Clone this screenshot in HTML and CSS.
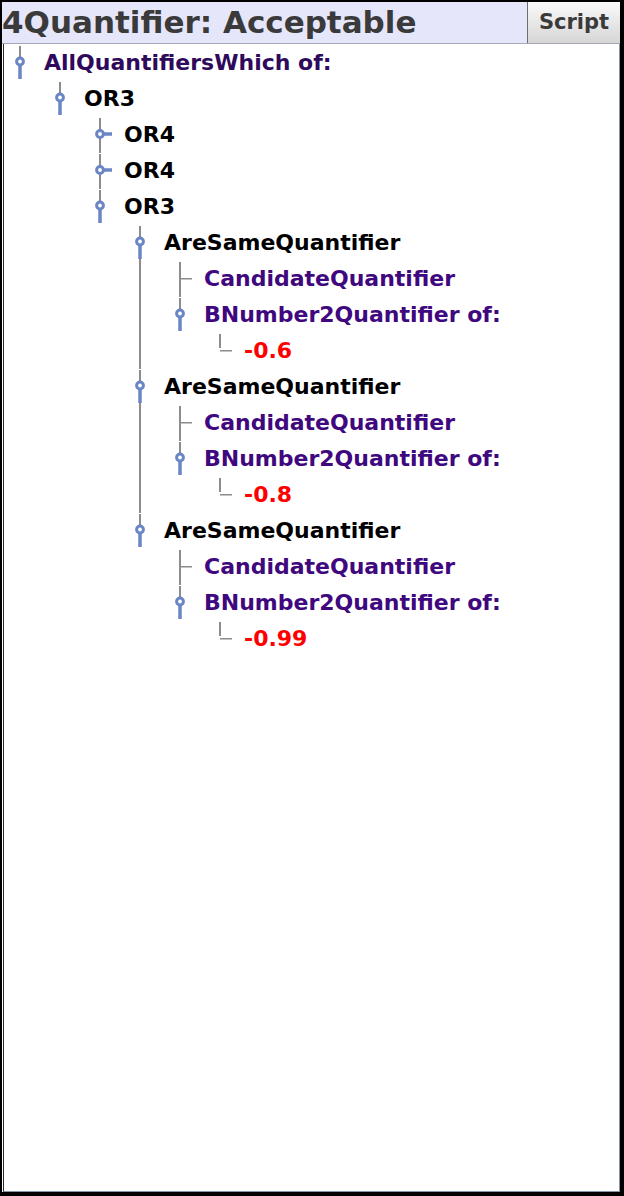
FILE: index.html
```html
<!DOCTYPE html>
<html>
<head>
<meta charset="utf-8">
<link rel="stylesheet" href="styles.css">
</head>
<body>
<svg class="defs" width="0" height="0">
  <symbol id="k-open" viewBox="0 0 24 36">
    <rect x="10.25" y="19" width="3.5" height="15" fill="#6b86c4"/>
    <circle cx="12" cy="16.5" r="3.4" fill="#fff" stroke="#6b86c4" stroke-width="3"/>
  </symbol>
  <symbol id="k-closed" viewBox="0 0 24 36">
    <rect x="15" y="15.25" width="10" height="3.5" fill="#6b86c4"/>
    <circle cx="12" cy="17" r="3.4" fill="#fff" stroke="#6b86c4" stroke-width="3"/>
  </symbol>
  <symbol id="k-leaf" viewBox="0 0 24 36">
    <rect x="12" y="17" width="14" height="1.5" fill="#8c8c8c"/>
  </symbol>
</svg>
<div class="app">
  <div class="header">
    <div class="title">4Quantifier: Acceptable</div>
    <div class="btn">Script</div>
  </div>
  <div class="tree">
    <ul class="group root">
      <li class="node">
        <div class="row"><svg class="knob"><use href="#k-open"/></svg><span class="lbl fn">AllQuantifiersWhich of:</span></div>
        <ul class="group">
          <li class="node">
            <div class="row"><svg class="knob"><use href="#k-open"/></svg><span class="lbl">OR3</span></div>
            <ul class="group">
              <li class="node">
                <div class="row"><svg class="knob"><use href="#k-closed"/></svg><span class="lbl">OR4</span></div>
              </li>
              <li class="node">
                <div class="row"><svg class="knob"><use href="#k-closed"/></svg><span class="lbl">OR4</span></div>
              </li>
              <li class="node">
                <div class="row"><svg class="knob"><use href="#k-open"/></svg><span class="lbl">OR3</span></div>
                <ul class="group">
                  <li class="node">
                    <div class="row"><svg class="knob"><use href="#k-open"/></svg><span class="lbl">AreSameQuantifier</span></div>
                    <ul class="group">
                      <li class="node">
                        <div class="row"><svg class="knob"><use href="#k-leaf"/></svg><span class="lbl q">CandidateQuantifier</span></div>
                      </li>
                      <li class="node">
                        <div class="row"><svg class="knob"><use href="#k-open"/></svg><span class="lbl q">BNumber2Quantifier of:</span></div>
                        <ul class="group">
                          <li class="node">
                            <div class="row"><svg class="knob"><use href="#k-leaf"/></svg><span class="lbl num">-0.6</span></div>
                          </li>
                        </ul>
                      </li>
                    </ul>
                  </li>
                  <li class="node">
                    <div class="row"><svg class="knob"><use href="#k-open"/></svg><span class="lbl">AreSameQuantifier</span></div>
                    <ul class="group">
                      <li class="node">
                        <div class="row"><svg class="knob"><use href="#k-leaf"/></svg><span class="lbl q">CandidateQuantifier</span></div>
                      </li>
                      <li class="node">
                        <div class="row"><svg class="knob"><use href="#k-open"/></svg><span class="lbl q">BNumber2Quantifier of:</span></div>
                        <ul class="group">
                          <li class="node">
                            <div class="row"><svg class="knob"><use href="#k-leaf"/></svg><span class="lbl num">-0.8</span></div>
                          </li>
                        </ul>
                      </li>
                    </ul>
                  </li>
                  <li class="node">
                    <div class="row"><svg class="knob"><use href="#k-open"/></svg><span class="lbl">AreSameQuantifier</span></div>
                    <ul class="group">
                      <li class="node">
                        <div class="row"><svg class="knob"><use href="#k-leaf"/></svg><span class="lbl q">CandidateQuantifier</span></div>
                      </li>
                      <li class="node">
                        <div class="row"><svg class="knob"><use href="#k-open"/></svg><span class="lbl q">BNumber2Quantifier of:</span></div>
                        <ul class="group">
                          <li class="node">
                            <div class="row"><svg class="knob"><use href="#k-leaf"/></svg><span class="lbl num">-0.99</span></div>
                          </li>
                        </ul>
                      </li>
                    </ul>
                  </li>
                </ul>
              </li>
            </ul>
          </li>
        </ul>
      </li>
    </ul>
  </div>
</div>
</body>
</html>
```
FILE: styles.css
```css
html, body {
  margin: 0;
  padding: 0;
}
body {
  background: #000;
  width: 624px;
  height: 1196px;
  overflow: hidden;
  font-family: "DejaVu Sans", Verdana, sans-serif;
}
.defs {
  position: absolute;
  width: 0;
  height: 0;
}
.app {
  margin: 2px 4px 0 2px;
  height: 1190px;
  display: flex;
  flex-direction: column;
  background: #fff;
}
.header {
  height: 41px;
  display: flex;
  background: #e6e6fa;
  border-bottom: 1px solid #a3a8b8;
}
.title {
  flex: 1;
  font-size: 31px;
  font-weight: bold;
  color: #3a3a3a;
  line-height: 41px;
  white-space: nowrap;
}
.btn {
  width: 92px;
  border-left: 1px solid #6e6e6e;
  background: linear-gradient(#fafafa, #e4e4e4 60%, #d6d6d6);
  font-size: 21px;
  font-weight: bold;
  color: #3a3a3a;
  line-height: 40px;
  text-align: center;
}
.tree {
  flex: 1;
  margin-left: 1px;
  border: 1px solid #8394a4;
  border-left-color: #2a2a2a;
  border-top: none;
  padding: 1px 0 0 4px;
}
.group {
  list-style: none;
  margin: 0 0 0 40px;
  padding: 0;
}
.group.root {
  margin-left: 0;
}
.node {
  position: relative;
}
.node::before {
  content: "";
  position: absolute;
  left: 11px;
  top: 1px;
  width: 2px;
  height: 14px;
  background: #8c8c8c;
}
.node:not(:last-child)::after {
  content: "";
  position: absolute;
  left: 11px;
  top: 14px;
  bottom: 0;
  width: 2px;
  background: #8c8c8c;
}
.row {
  height: 36px;
  display: flex;
  align-items: center;
  position: relative;
  z-index: 1;
}
.knob {
  width: 24px;
  height: 36px;
  flex: none;
  margin-right: 12px;
}
.lbl {
  font-size: 22px;
  font-weight: bold;
  color: #000;
  white-space: nowrap;
  line-height: 36px;
}
.lbl.fn {
  color: #2f0a5c;
}
.lbl.q {
  color: #40087f;
}
.lbl.num {
  color: #ff0000;
}
```
